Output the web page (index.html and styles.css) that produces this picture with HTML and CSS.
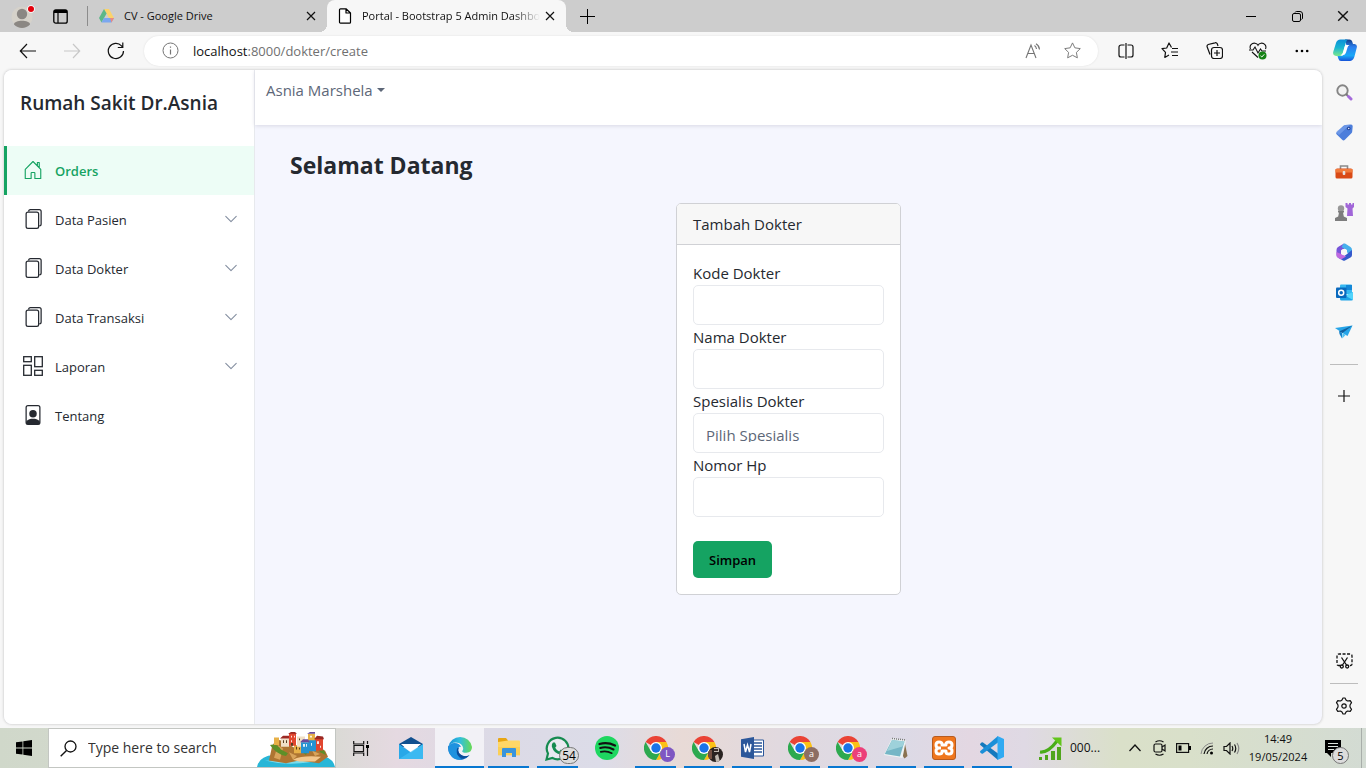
FILE: index.html
```html
<!DOCTYPE html>
<html lang="id">
<head>
<meta charset="utf-8">
<meta name="viewport" content="width=device-width, initial-scale=1">
<title>Portal - Bootstrap 5 Admin Dashboard</title>
<link rel="stylesheet" href="styles.css">
</head>
<body>
<svg class="sprite" aria-hidden="true">
  <symbol id="files" viewBox="0 0 16 16"><path fill="currentColor" fill-rule="evenodd" d="M4 2h7a2 2 0 0 1 2 2v10a2 2 0 0 1-2 2H4a2 2 0 0 1-2-2V4a2 2 0 0 1 2-2zm0 1a1 1 0 0 0-1 1v10a1 1 0 0 0 1 1h7a1 1 0 0 0 1-1V4a1 1 0 0 0-1-1H4z"/><path fill="currentColor" d="M6 0h7a2 2 0 0 1 2 2v10a2 2 0 0 1-2 2v-1a1 1 0 0 0 1-1V2a1 1 0 0 0-1-1H6a1 1 0 0 0-1 1H4a2 2 0 0 1 2-2z"/></symbol>
  <symbol id="chevron" viewBox="0 0 16 16"><path fill="none" stroke="currentColor" stroke-width="1.200" stroke-linecap="round" stroke-linejoin="round" d="M2 5l6 6 6-6"/></symbol>
  <symbol id="close" viewBox="0 0 10 10"><path fill="none" stroke="currentColor" stroke-width="1.2" d="M1 1l8 8M9 1L1 9"/></symbol>
  <symbol id="chrome" viewBox="0 0 24 24"><path fill="#ea4335" d="M12 12L1.6 6A12 12 0 0 1 22.4 6z"/><path fill="#fbc116" d="M12 6h10.4A12 12 0 0 1 12 24l5.2-9z"/><path fill="#2da94f" d="M1.6 6A12 12 0 0 0 12 24l5.2-9L12 12 6.800 15z"/><circle cx="12" cy="12" r="6" fill="#fff"/><circle cx="12" cy="12" r="4.700" fill="#1a73e8"/></symbol>
  <symbol id="star" viewBox="0 0 20 20"><path fill="none" stroke="currentColor" stroke-linejoin="round" d="M10 2l2.500 5.200 5.700.8-4.100 4 1 5.700-5.100-2.700-5.100 2.700 1-5.700-4.100-4 5.700-.8z"/></symbol>
</svg>

<div class="tabbar">
  <button class="tab-tool profile" aria-label="Profile"><svg width="24" height="28" viewBox="0 0 24 28"><circle cx="11" cy="15" r="10.500" fill="#d6d2ca"/><circle cx="11" cy="12" r="5.200" fill="#8b8783"/><path d="M3 22.500c0-5 16-5 16 0-4 4.500-12 4.500-16 0z" fill="#8b8783"/><circle cx="20" cy="7" r="3.800" fill="#fff"/><circle cx="20" cy="7" r="3" fill="#e3000b"/></svg></button>
  <button class="tab-tool" aria-label="Tab actions"><svg width="15" height="15" viewBox="0 0 15 15"><rect x=".8" y=".8" width="13.400" height="13.400" rx="2" fill="none" stroke="#000" stroke-width="1.300"/><path d="M1 1h13v3H1z"/><path d="M5 4v10" stroke="#000" stroke-width="1.200"/></svg></button>
  <span class="tab-rule"></span>
  <div class="tab">
    <svg width="15" height="14" viewBox="0 0 15 14"><path fill="#fcd36a" d="M5 0h5l5 9h-5z"/><path fill="#5cb888" d="M5 0L0 9l2.500 4.500L7.600 4.500z"/><path fill="#7ba7ef" d="M5 9h10l-2.500 4.500h-10z"/><path fill="#ee897d" d="M11 9h4l-2.500 4.500z"/></svg>
    <span class="tab-title">CV - Google Drive</span>
    <button class="tab-close" aria-label="Close tab"><svg width="10" height="10"><use href="#close"/></svg></button>
  </div>
  <div class="tab tab-active">
    <svg width="14" height="16" viewBox="0 0 14 16"><path fill="#fff" stroke="#000" stroke-width="1.200" stroke-linejoin="round" d="M2.500.8H8L12.500 5v9.200a1 1 0 0 1-1 1h-9a1 1 0 0 1-1-1V1.800a1 1 0 0 1 1-1zM8 1v4h4.500"/></svg>
    <span class="tab-title faded">Portal - Bootstrap 5 Admin Dashboard</span>
    <button class="tab-close" aria-label="Close tab"><svg width="10" height="10"><use href="#close"/></svg></button>
  </div>
  <button class="new-tab" aria-label="New tab"><svg width="15" height="15" viewBox="0 0 15 15"><path stroke="#000" d="M7.500 0v15M0 7.500h15"/></svg></button>
  <div class="window-buttons">
    <button aria-label="Minimize"><svg width="10" height="10" viewBox="0 0 10 10"><path stroke="#000" d="M0 5.500h10"/></svg></button>
    <button aria-label="Restore"><svg width="11" height="11" viewBox="0 0 11 11"><path fill="none" stroke="#000" d="M3 1.500Q3.500.5 4.500.5H8A2.500 2.500 0 0 1 10.500 3v4q0 1-1 1.500"/><rect x=".5" y="2.500" width="8" height="8" rx="1.500" fill="none" stroke="#000"/></svg></button>
    <button aria-label="Close"><svg width="12" height="12"><use href="#close"/></svg></button>
  </div>
</div>

<div class="toolbar">
  <button aria-label="Back"><svg width="18" height="16" viewBox="0 0 18 16"><path fill="none" stroke="#111" stroke-width="1.200" d="M17 8H1.500M8 1L1.300 8 8 15"/></svg></button>
  <button aria-label="Forward" class="disabled"><svg width="18" height="16" viewBox="0 0 18 16"><path fill="none" stroke="#c8c8c8" stroke-width="1.200" d="M1 8h15.500M10 1l6.700 7-6.700 7"/></svg></button>
  <button aria-label="Refresh"><svg width="18" height="18" viewBox="0 0 18 18"><path fill="none" stroke="#111" stroke-width="1.200" d="M16.500 9A7.600 7.600 0 1 1 14.500 3.800L15.500 5M15.800.5v5h-5"/></svg></button>
  <div class="omnibox">
    <svg width="17" height="17" viewBox="0 0 17 17"><circle cx="8.500" cy="8.500" r="7.500" fill="none" stroke="#757575"/><path stroke="#757575" stroke-width="1.200" d="M8.500 7.500v5M8.500 4.500v1.300"/></svg>
    <span class="url"><b>localhost</b>:8000/dokter/create</span>
    <button aria-label="Read aloud"><svg width="17" height="16" viewBox="0 0 17 16"><path fill="none" stroke="#757575" stroke-width="1.100" d="M1 15L6 2l5 13M2.800 10.500h6.400M9.500 2.500a5 5 0 0 1 2 3.500M11 .8a7 7 0 0 1 3.500 5.700"/></svg></button>
    <button aria-label="Favorite"><svg class="muted" width="19" height="19"><use href="#star"/></svg></button>
  </div>
  <button aria-label="Split screen"><svg width="16" height="16" viewBox="0 0 16 16"><path fill="none" stroke="#111" stroke-width="1.200" d="M6.500 2H3a2 2 0 0 0-2 2v8a2 2 0 0 0 2 2h3.500M9.500 2H13a2 2 0 0 1 2 2v8a2 2 0 0 1-2 2H9.500M8 0v16"/></svg></button>
  <button aria-label="Favorites"><svg width="18" height="17" viewBox="0 0 18 17"><path fill="none" stroke="#111" stroke-width="1.200" stroke-linejoin="round" d="M10.500 5.500L8 1 5.700 6 1 6.700l3.500 3.700-.7 5L8 13M11 6.500h6M10 10h7M11 13.500h6"/></svg></button>
  <button aria-label="Collections"><svg width="17" height="17" viewBox="0 0 17 17"><g fill="none" stroke="#111" stroke-width="1.200"><path d="M4 12.500L1.200 5a2 2 0 0 1 1-2.500L9 .8a2 2 0 0 1 2.500 1.500L12 4"/><rect x="5.500" y="5.500" width="11" height="11" rx="2.500"/><path d="M11 8v6M8 11h6"/></g></svg></button>
  <button aria-label="Browser essentials"><svg width="18" height="18" viewBox="0 0 18 18"><path fill="none" stroke="#111" stroke-width="1.100" d="M1.500 7C0 3.500 3 .8 6 1.200c1.500.2 2.500 1 3 2 .5-1 1.500-1.800 3-2 3-.4 6 2.300 4.500 5.800M0 8h4l2-3 3 6 2.500-4L13 9h4M3 10l6 5.500"/><circle cx="13.500" cy="13.500" r="4" fill="#168316"/><path d="M11.500 13.800l1.300 1.200 2.500-2.700" fill="none" stroke="#fff"/></svg></button>
  <button aria-label="Settings and more"><svg width="14" height="4" viewBox="0 0 14 4"><circle cx="1.800" cy="2" r="1.300"/><circle cx="7" cy="2" r="1.300"/><circle cx="12.200" cy="2" r="1.300"/></svg></button>
  <button class="copilot" aria-label="Copilot"><svg width="24" height="23" viewBox="0 0 24 23"><defs><linearGradient id="cp1" x2="0" y2="1"><stop stop-color="#0a8fd8"/><stop offset=".5" stop-color="#19b5d2"/><stop offset="1" stop-color="#7be88b"/></linearGradient><linearGradient id="cp2" x2="0" y2="1"><stop stop-color="#123c86"/><stop offset=".35" stop-color="#2b7fef"/><stop offset=".75" stop-color="#19a8f7"/><stop offset="1" stop-color="#1652d8"/></linearGradient></defs><path fill="url(#cp2)" d="M12 .5h4.500q2 0 2.700 2l.8 2.500h1.500q3 .5 2.300 3.500l-2.200 8.500q-1 4.500-4.500 5H8q-2 0-2.700-2.500L4.500 17h3.800q2 0 2.700-2.500l2.500-8z"/><path fill="url(#cp1)" d="M7.500.5h7.200q-1.300 1-2 3.500L10 14q-1 3-3.500 3H3q-3.500-.5-2.800-4L3 4Q4 .8 7.500.5z"/><path fill="#fff" d="M13 6h3.500q-1.500.5-2 2.500l-1.500 5q-.8 2.500-3 2.500H7.500q1.800-.5 2.400-2.500L11.500 8q.5-1.700 1.500-2z"/></svg></button>
</div>

<div class="workspace">
  <div class="page">
    <aside class="sidepanel">
      <div class="brand">Rumah Sakit Dr.Asnia</div>
      <nav class="menu">
        <a class="active" href="#orders"><svg width="20" height="20" viewBox="0 0 16 16"><path fill="none" stroke="currentColor" stroke-width=".9" stroke-linejoin="round" d="M1.800 7.500L8 1.200l6.200 6.300v7.300h-4.700v-4.300a.5.500 0 0 0-.5-.5H7a.5.500 0 0 0-.5.500v4.300H1.800zM11.500 4.500V2h1.500v4"/></svg><span>Orders</span></a>
        <a href="#pasien"><svg width="20" height="20"><use href="#files"/></svg><span>Data Pasien</span><svg class="arrow" width="14" height="14"><use href="#chevron"/></svg></a>
        <a href="#dokter"><svg width="20" height="20"><use href="#files"/></svg><span>Data Dokter</span><svg class="arrow" width="14" height="14"><use href="#chevron"/></svg></a>
        <a href="#transaksi"><svg width="20" height="20"><use href="#files"/></svg><span>Data Transaksi</span><svg class="arrow" width="14" height="14"><use href="#chevron"/></svg></a>
        <a href="#laporan"><svg width="20" height="20" viewBox="0 0 20 20"><g fill="none" stroke="currentColor" stroke-width="1.300"><rect x=".7" y=".7" width="7.600" height="5"/><rect x="11.700" y=".7" width="7.600" height="10"/><rect x=".7" y="9.300" width="7.600" height="10"/><rect x="11.700" y="14.300" width="7.600" height="5"/></g></svg><span>Laporan</span><svg class="arrow" width="14" height="14"><use href="#chevron"/></svg></a>
        <a href="#tentang"><svg width="20" height="20" viewBox="0 0 16 16"><rect x="2.500" y=".5" width="11" height="15" rx="1.500" fill="none" stroke="currentColor"/><circle cx="8" cy="7" r="3" fill="currentColor"/><path fill="currentColor" d="M2.500 14c0-1.500 2-3 5.500-3s5.500 1.500 5.500 3q0 1.500-1.500 1.500H4q-1.500 0-1.500-1.500z"/></svg><span>Tentang</span></a>
      </nav>
    </aside>
    <div class="main">
      <header class="topbar"><button class="user">Asnia Marshela</button></header>
      <main class="content">
        <h1>Selamat Datang</h1>
        <form class="card">
          <div class="card-header">Tambah Dokter</div>
          <div class="card-body">
            <label for="kode">Kode Dokter</label>
            <input id="kode" type="text">
            <label for="nama">Nama Dokter</label>
            <input id="nama" type="text">
            <label for="spesialis">Spesialis Dokter</label>
            <select id="spesialis"><option>Pilih Spesialis</option></select>
            <label for="hp">Nomor Hp</label>
            <input id="hp" type="text">
            <button class="submit" type="button">Simpan</button>
          </div>
        </form>
      </main>
    </div>
  </div>
  <div class="rail">
    <button aria-label="Search"><svg width="17" height="17" viewBox="0 0 17 17"><circle cx="6.500" cy="6.500" r="5.200" fill="#f2f2f2" stroke="#858585" stroke-width="1.900"/><path stroke="#777" stroke-width="2" d="M10 10l2 2"/><path stroke="#a56bdb" stroke-width="3" stroke-linecap="round" d="M12.500 12.500l2.500 2.500"/></svg></button>
    <button aria-label="Shopping"><svg width="17" height="17" viewBox="0 0 17 17"><path fill="#4d7edb" d="M9.500 1L15 .5q1.700 0 1.700 1.700l-.5 5.300q0 1-.8 1.800l-6.500 6.500q-1.400 1.200-2.700 0L.8 10.500q-1.200-1.300 0-2.600l6.700-6.200q.9-.7 2-.7z"/><path fill="#82a9ee" d="M9.500 1L14 .7 3 11 .8 9q-.8-1 .2-2z" opacity=".6"/><circle cx="12.700" cy="4.500" r="1.800" fill="#23459b"/><circle cx="12.700" cy="4.500" r=".8" fill="#dfe9ff"/></svg></button>
    <button aria-label="Tools"><svg width="18" height="14" viewBox="0 0 18 14"><path fill="none" stroke="#8b8b8b" stroke-width="1.600" d="M5.500 4V1h7v3"/><rect x=".5" y="3.500" width="17" height="10" rx="1.500" fill="#d94a16"/><path fill="#f17b3c" d="M.5 4h17v3.500H.5z"/><rect x="7.700" y="6" width="2.600" height="4" rx="1" fill="#e3e3e3"/></svg></button>
    <button aria-label="Games"><svg width="19" height="18" viewBox="0 0 19 18"><path fill="#a166d8" d="M10.500 0h2v1.500h1.500V0h2v1.500h1.500V0H19v4l-1.500 1.500.5 7.500h-6l.5-7.500-2-1.500z"/><circle cx="6" cy="5.500" r="3.200" fill="#989898"/><path fill="#7d7d7d" d="M3 8h6v1.500H8l.8 4L12 15v3H0v-3l3.200-1.500.8-4H3z"/></svg></button>
    <button aria-label="Microsoft 365"><svg width="18" height="18" viewBox="0 0 18 18"><path fill="#7655d9" d="M9 .5L3 4Q1.500 5 1.500 7v5q0 2 1.600 2.800L6 13V7.500L12 4z"/><path fill="#46b0ec" d="M8.500.7q1-.5 2 0L15.500 4Q17 5 17 7v4.500l-5-2V7L6.500 4z"/><path fill="#3459cc" d="M17 7v5q0 1.500-1.500 2.500L10 17.500q-1 .5-2 0L3 14.700l6-1.500 3-2.200z"/><path fill="#c069df" d="M1.500 9v3q0 2 1.600 2.800l3 1.700 5-3-5-2.500z"/><circle cx="9" cy="9" r="3" fill="#f7f7f7"/></svg></button>
    <button aria-label="Outlook"><svg width="17" height="17" viewBox="0 0 17 17"><path fill="#35b8f1" d="M4 1.500Q4 .5 5 .5h10q1 0 1 1V10H4z"/><path fill="#1488d8" d="M10 1h6v5h-6z"/><path fill="#1fa4e7" d="M4 9l6.500 3L17 8v7q0 1.500-1.500 1.500h-10Q4 16.500 4 15z"/><path fill="#52d4fb" d="M17 8v8L9 11.500z"/><rect y="3.500" width="10.500" height="10.500" rx="1" fill="#0969bd"/><circle cx="5.200" cy="8.700" r="2.500" fill="none" stroke="#fff" stroke-width="1.500"/></svg></button>
    <button aria-label="Drop"><svg width="18" height="15" viewBox="0 0 18 15"><path fill="#27a5e8" d="M0 3L17.500.5 12.500 11 7.500 8z"/><path fill="#125f9e" d="M4 6.500L17.500.5 7.500 8z"/><path fill="#1680c9" d="M4 6l3 2v5.500L4.500 9z"/><path fill="#4bc3f5" d="M7.500 8l3 2-3.300 3.500z"/></svg></button>
    <hr>
    <button class="add" aria-label="Customize"><svg width="12" height="12" viewBox="0 0 12 12"><path stroke="#111" d="M6 0v12M0 6h12" stroke-width="1.200"/></svg></button>
    <button class="shot" aria-label="Screenshot"><svg width="17" height="16" viewBox="0 0 17 16"><g fill="none" stroke="#111" stroke-width="1.300"><path stroke-dasharray="3 1.500" d="M4 12.500H2.500q-1.500 0-1.500-1.500V3q0-2 2-2h11q2 0 2 2v8q0 1.500-1.500 1.500H13"/><path d="M5.500 4.500l5 7.500M11.500 4.500l-5 7.500"/><circle cx="5.800" cy="13.500" r="1.500"/><circle cx="11.200" cy="13.500" r="1.500"/></g></svg></button>
    <hr>
    <button class="gear" aria-label="Settings"><svg width="18" height="18" viewBox="0 0 18 18"><g fill="none" stroke="#111" stroke-width="1.200" stroke-linejoin="round"><path d="M7 3l1-2h2l1 2 1.500 1 2.700-.3 1.300 2L15 8v2l1.500 2.300-1.300 2-2.700-.3L11 15l-1 2H8l-1-2-1.500-1-2.700.3-1.300-2L3 10V8L1.500 5.700l1.300-2L5.500 4z"/><circle cx="9" cy="9" r="2.200"/></g></svg></button>
  </div>
</div>

<div class="taskbar">
  <button class="start" aria-label="Start"><svg width="16" height="16" viewBox="0 0 16 16"><path d="M0 2.300L6.500 1.400v6.200H0zM7.300 1.300L16 0v7.600H7.300zM0 8.400h6.500v6.200L0 13.700zM7.300 8.400H16V16l-8.700-1.300z"/></svg></button>
  <div class="search">
    <svg width="17" height="17" viewBox="0 0 17 17"><circle cx="10.500" cy="6.500" r="5.500" fill="none" stroke="#111" stroke-width="1.300"/><path stroke="#111" stroke-width="1.400" d="M6.500 10.500L.7 16.300"/></svg>
    <input type="text" aria-label="Search" placeholder="Type here to search">
    <svg class="island" width="78" height="35" viewBox="0 0 78 38" preserveAspectRatio="none"><path fill="#28b6d7" d="M0 38q2-12 17-13h44q15 2 17 13z"/><path fill="#7bdcec" d="M8 31q28 8 60-2-25 4-60 2z"/><path fill="#ae7532" d="M12 31l3-15 4-8 8 2 7 5 8 5 14-3 12 3 3 7-9 7-20-3-13 3z"/><path fill="#d9a45b" d="M17 28l4-14 5 4-3 12zM32 22l8 4-4 4zM55 20l8 4-5 2z"/><path fill="#f3c78c" d="M36 30q10-5 28-3l-6 5H42z"/><path fill="#5d8f28" d="M13 14q7-2 11 5l7 4-2 3q-10-2-16-12zM44 21q3-3 7-1l-2 5zM60 14q6 1 9 11l-6-3z"/><path fill="#e7b047" d="M17 6h5v8h-5zM51 2h7v12h-7zM37 14h7v9h-7z"/><path fill="#f0dfc6" d="M24 7h8v9h-8zM40 5h8v11h-8z"/><path fill="#e1462f" d="M32 1h7v14h-7zM58 7h8v13h-8z"/><path fill="#9b2823" d="M31 2l3-2h4l2 2zM57 8l3-4 6 1 1 3zM23 7l3-3h6v3z"/><path fill="#2593d2" d="M44 11h8v12h-8zM52 9h7v12h-7z"/><path fill="#694b9a" d="M43 11l3-3h5l2 3zM50 2l3-2h5v2z"/><path fill="#fff" opacity=".85" d="M34 4h1v2h-1zM37 4h1v2h-1zM34 9h1v2h-1zM46 13h2v3h-2zM49 13h1v3h-1zM54 12h1v3h-1zM60 10h2v3h-2zM53 4h2v2h-2zM63 15h1v2h-1z"/><path fill="#554023" d="M26 9h1v3h-1zM29 9h1v3h-1zM42 7h1v2h-1zM39 16h1v3h-1zM42 17h1v2h-1zM34 12h2v3h-2z"/></svg>
  </div>
  <button class="taskview" aria-label="Task View"><svg width="17" height="15" viewBox="0 0 17 15"><path fill="none" stroke="#111" stroke-width="1.200" d="M.7 0v3h10V0M.7 15v-3h10v3M1 4.500h9.500v6H1zM14.500 0v3M14.500 7v8"/><rect x="13" y="4" width="3" height="3"/></svg></button>
  <div class="apps wide">
    <button aria-label="Mail"><svg width="24" height="24" viewBox="0 0 24 24"><path fill="#11508f" d="M0 8l12-7 12 7v3H0z"/><path fill="#fff" d="M2 8h20l-10 9z"/><path fill="#28a8e8" d="M0 8l12 8.500L24 8v15H0z"/><path fill="#43c0f5" d="M0 23L24 8v15z" opacity=".7"/></svg></button>
    <button class="current" aria-label="Edge"><svg width="24" height="24" viewBox="0 0 24 24"><defs><linearGradient id="ed"><stop stop-color="#168ed8"/><stop offset=".5" stop-color="#32bfdc"/><stop offset="1" stop-color="#68da52"/></linearGradient></defs><path fill="#0c63b7" d="M.3 10A12 12 0 0 0 21.500 19.300q-5.500 2.200-9-.8-3.500-3-1.300-7z"/><path fill="#1e92df" d="M.3 11.500Q1 7 6.500 7q5 .2 6.500 4-2.700-1-4 2-1.500 6 5 10.500Q6 25 2 18.500-.2 15 .3 11.500z"/><path fill="url(#ed)" d="M.3 11A12 12 0 0 1 24 11q0 5.500-5.700 5.800-4.600 0-4-1.800 1-1 .9-2.800Q14.500 7 8 6.500 2 6.500.3 11z"/><path fill="#0b4c98" d="M9 13q-1.500 8 6.500 9.200 3.500-.5 6-3-5.500 2.300-9-.7Q9.500 16 9.800 11.500z"/></svg></button>
    <button class="open" aria-label="File Explorer"><svg width="22" height="20" viewBox="0 0 22 20"><path fill="#e8a613" d="M0 1q0-1 1-1h7l2 2.500V6H0z"/><path fill="#ffd766" d="M0 4l10-1.500h11q1 0 1 1V17H0z"/><path fill="#f9c94a" d="M0 9h22v8.500H0z" opacity=".6"/><path fill="#3994dc" d="M4 11q0-1 1-1h12q1 0 1 1v8h-4v-4H8v4H4z"/></svg></button>
    <button class="open" aria-label="WhatsApp"><svg width="25" height="25" viewBox="0 0 25 25"><path fill="#fff" stroke="#168b50" stroke-width="2.200" d="M1.500 23.500L3 17.500A10.800 10.800 0 1 1 7.500 22z" fill-opacity=".4"/><path fill="#168b50" d="M8 6.500h2l1.500 3.500-1.300 1.700q1.300 2.500 4 3.700l1.700-1.900 3.300 1.700q.4 3-3.200 3.300Q9 18 6.800 10.500 6.500 8 8 6.500z"/></svg><span class="badge">54</span></button>
    <button aria-label="Spotify"><svg width="24" height="24" viewBox="0 0 24 24"><circle cx="12" cy="12" r="12" fill="#1ed760"/><path fill="none" stroke="#111" stroke-linecap="round" stroke-width="2.300" d="M4.500 8q8-2.200 15.500 1.500"/><path fill="none" stroke="#111" stroke-linecap="round" stroke-width="2" d="M5.200 12q7-1.800 13.300 1.500"/><path fill="none" stroke="#111" stroke-linecap="round" stroke-width="1.700" d="M5.800 15.800q6-1.300 11 1.400"/></svg></button>
    <button class="open" aria-label="Chrome L"><svg width="24" height="24"><use href="#chrome"/></svg><span class="who violet">L</span></button>
  </div>
  <div class="apps">
    <button class="open" aria-label="Chrome"><svg width="24" height="24"><use href="#chrome"/></svg><span class="who photo"><svg width="15" height="15" viewBox="0 0 15 15"><path fill="#c1bab2" d="M6 1h5v4H6zM7 9l3-2 2 8H8z"/><path fill="#3d302c" d="M6 2h4v2H6z"/><path fill="#765143" d="M0 3h4v9H0z"/></svg></span></button>
    <button class="open" aria-label="Word"><svg width="23" height="22" viewBox="0 0 23 22"><path fill="#fff" stroke="#2b579a" d="M11 3h11.500v16H11z"/><path stroke="#2b579a" stroke-width="1.400" d="M13 6h8M13 9h8M13 12h8M13 15h8"/><path fill="#2b579a" d="M0 2.300L13 0v22L0 19.700z"/><path fill="none" stroke="#fff" stroke-width="1.500" d="M3 7l1.500 8 2-7 2 7L10 7"/></svg></button>
    <button class="open" aria-label="Chrome a"><svg width="24" height="24"><use href="#chrome"/></svg><span class="who brown">a</span></button>
    <button class="open" aria-label="Chrome a"><svg width="24" height="24"><use href="#chrome"/></svg><span class="who pink">a</span></button>
    <button class="open" aria-label="Notepad"><svg width="24" height="22" viewBox="0 0 24 22"><path fill="#8a7250" d="M20 2l3.500 17-3 2.500-2-3z"/><path fill="#eef3f3" d="M8 1l14 2-3.500 18L0 18z"/><path fill="#75b6c6" d="M8 3l12.500 1.500L16 19.500.8 17z"/><path fill="#a9d8df" d="M8 3l12.500 1.500-2 5L3 14z" opacity=".8"/><path stroke="#777" stroke-dasharray="1 1" stroke-width="1.500" d="M8 1.500L22 3"/></svg></button>
    <button class="open" aria-label="XAMPP"><svg width="24" height="24" viewBox="0 0 24 24"><rect x=".5" y=".5" width="23" height="23" rx="2.500" fill="#ef761d" stroke="#b75b20"/><path fill="none" stroke="#fff" stroke-width="3" stroke-linejoin="round" d="M9 12H7q-3 0-3-3t3-3 3 2v1h4V8q0-2 3-2t3 3-3 3q3 0 3 3t-3 3-3-2v-1h-4v1q0 2-3 2t-3-3 3-3"/></svg></button>
    <button class="open" aria-label="Visual Studio Code"><svg width="24" height="24" viewBox="0 0 24 24"><path fill="#1379bd" d="M1.500 6.500L.3 7.800q-.5.600 0 1.200L18 24V17.500L3 6.500q-.8-.5-1.500 0z"/><path fill="#1b8fd8" d="M1.500 17.500L.3 16.200q-.5-.6 0-1.200L18 0v6.500L3 17.500q-.8.500-1.500 0z"/><path fill="#31aaf2" d="M17.500 0L24 3v18l-6.500 3z"/></svg></button>
  </div>
  <div class="tray">
    <button class="stock"><svg width="23" height="23" viewBox="0 0 23 23"><path fill="#50a51c" d="M0 20h3v3H0zM6 18h3v5H6zM12 14h4v9h-4zM18 10h4v13h-4z"/><path fill="none" stroke="#49ad18" stroke-width="3.200" d="M1 15q8 1 17-11"/><path fill="#62c51b" d="M13 .5h9.500v9z"/></svg><span>000...</span></button>
    <button aria-label="Show hidden icons"><svg width="12" height="8" viewBox="0 0 12 8"><path fill="none" stroke="#111" stroke-width="1.300" d="M.5 7L6 1l5.500 6"/></svg></button>
    <button aria-label="Meet Now"><svg width="13" height="16" viewBox="0 0 13 16"><g fill="none" stroke="#111" stroke-width="1.200"><rect x="1" y="4" width="8" height="8" rx="1.500"/><path d="M9 7l3-2v6L9 9M2.500 2q4-2.500 8 0M2.500 14q4 2.500 8 0"/></g></svg></button>
    <button aria-label="Battery"><svg width="15" height="10" viewBox="0 0 15 10"><rect x=".6" y=".6" width="12" height="8.800" fill="none" stroke="#111" stroke-width="1.200"/><path d="M2.500 2.500h3v5h-3zM13 3h2v4h-2z"/></svg></button>
    <button aria-label="Network"><svg width="14" height="14" viewBox="0 0 14 14"><g fill="none"><path stroke="#888" d="M1 13A12 12 0 0 1 13 2"/><path stroke="#111" stroke-width="1.200" d="M4 13a9 9 0 0 1 9-8M7 13a6 6 0 0 1 6-5"/></g><circle cx="11.500" cy="12" r="1.500"/></svg></button>
    <button aria-label="Volume"><svg width="17" height="13" viewBox="0 0 17 13"><g fill="none" stroke="#111" stroke-width="1.200"><path d="M1 4.500h2.500L7 1v11L3.500 8.500H1zM9 4q1.500 2.500 0 5M11.500 2.500q2.500 4 0 8"/><path stroke="#888" d="M14 1q3.500 5.500 0 11"/></g></svg></button>
    <div class="clock"><time>14:49</time><time>19/05/2024</time></div>
    <button class="notify" aria-label="Notifications"><svg width="17" height="17" viewBox="0 0 17 17"><path d="M0 0h16v13H6v4l-4-4H0z"/><path stroke="#dde2dc" stroke-width="1.200" d="M3 3.500h10M3 6.500h10M3 9.500h6"/></svg><span class="badge round">5</span></button>
  </div>
</div>
</body>
</html>
```

FILE: styles.css
```css
*, *::before, *::after { box-sizing: border-box; }

body {
  margin: 0;
  min-height: 100vh;
  display: flex;
  flex-direction: column;
  background: #f7f7f7;
  color: #252930;
  font: 15px/24px "Open Sans", "Noto Sans", sans-serif;
}

button {
  margin: 0;
  padding: 0;
  border: 0;
  background: none;
  color: inherit;
  font: inherit;
  display: flex;
  align-items: center;
  justify-content: center;
}

svg { flex: none; display: block; }
.sprite { position: absolute; width: 0; height: 0; }

/* Browser tabs */
.tabbar {
  height: 32px;
  display: flex;
  align-items: center;
  background: #cdcdcd;
  color: #111;
  font-size: 11px;
  line-height: 16px;
}
.tab-tool { width: 32px; height: 32px; }
.profile { width: 44px; padding-left: 2px; }
.tab-rule { width: 1px; height: 20px; margin-left: 11px; background: #8c8c8c; }
.tab {
  width: 239px;
  height: 32px;
  display: flex;
  align-items: center;
  gap: 10px;
  padding: 0 10px 0 11px;
}
.tab-active {
  position: relative;
  background: #f7f7f7;
  border-radius: 8px 8px 0 0;
}
.tab-active::before,
.tab-active::after {
  content: "";
  position: absolute;
  bottom: 0;
  width: 8px;
  height: 8px;
}
.tab-active::before { left: -8px; background: radial-gradient(circle at 0 0, #cdcdcd 8px, #f7f7f7 8px); }
.tab-active::after { right: -8px; background: radial-gradient(circle at 100% 0, #cdcdcd 8px, #f7f7f7 8px); }
.tab-title { flex: 1; min-width: 0; overflow: hidden; white-space: nowrap; }
.faded { margin-right: -6px; mask-image: linear-gradient(to right, #000 85%, transparent); }
.tab-close { width: 12px; height: 16px; }
.new-tab { width: 42px; height: 32px; }
.window-buttons { display: flex; margin-left: auto; }
.window-buttons button { width: 46px; height: 32px; }

/* Address row */
.toolbar { height: 37px; display: flex; align-items: center; padding-left: 6px; }
.toolbar > button { width: 44px; height: 36px; }
.toolbar > .copilot { width: 42px; }
.omnibox {
  flex: 1;
  height: 30px;
  margin: 0 6px;
  padding: 0 6px 0 18px;
  display: flex;
  align-items: center;
  background: #fff;
  border-radius: 15px;
  box-shadow: 0 0 2px #ddd;
  font-size: 13px;
}
.omnibox button { width: 39px; height: 28px; }
.url { flex: 1; margin-left: 14px; color: #707070; }
.url b { font-weight: 400; color: #111; }
.muted { color: #757575; }

/* Viewport and browser rail */
.workspace { flex: 1; display: flex; padding: 1px 0 4px 4px; }
.page {
  flex: 1;
  display: flex;
  overflow: hidden;
  border-radius: 8px;
  background: #f5f6fe;
  box-shadow: 0 0 3px #bbb;
}
.rail { width: 44px; padding-top: 2px; display: flex; flex-direction: column; align-items: center; }
.rail button { width: 44px; height: 40px; }
.rail hr { width: 28px; margin: 12px 0; border: 0; border-top: 1px solid #bdbdbd; }
.rail .add { height: 38px; }
.rail .shot { height: 20px; margin-top: auto; }
.rail .gear { height: 20px; margin-bottom: 8px; }

/* Portal side panel */
.sidepanel { width: 251px; background: #fff; border-right: 1px solid #e7e9ed; }
.brand { padding: 21px 16px 31px; font-size: 19px; font-weight: 600; white-space: nowrap; }
.menu { display: flex; flex-direction: column; }
.menu a {
  height: 49px;
  display: flex;
  align-items: center;
  gap: 12px;
  padding: 0 16px;
  border-left: 3px solid transparent;
  color: #252930;
  font-size: 13px;
  text-decoration: none;
}
.menu a.active { border-color: #15a362; background: #edfdf6; color: #15a362; font-weight: 600; }
.menu svg { margin-bottom: 2px; }
.menu .arrow { margin-left: auto; color: #828d9f; }

/* Portal content */
.main { flex: 1; display: flex; flex-direction: column; }
.topbar {
  height: 55px;
  padding: 8px 11px;
  background: #fff;
  box-shadow: 0 1px 4px #d8d8e4;
}
.user { color: #5d6778; gap: 4px; }
.user::after { content: ""; border: 4px solid transparent; border-top-color: currentColor; border-bottom: 0; }
.content { flex: 1; padding: 24px 35px; }
h1 { margin: 0 0 22px; font-size: 23px; line-height: 32px; font-weight: 700; }
.card {
  width: 225px;
  margin: 0 auto;
  overflow: hidden;
  background: #fff;
  border: 1px solid #d0d1d5;
  border-radius: 5px;
}
.card-header { padding: 8px 16px; background: #f7f7f7; border-bottom: 1px solid #d0d1d5; }
.card-body { display: flex; flex-direction: column; padding: 16px; }
.card-body input,
.card-body select {
  width: 100%;
  height: 40px;
  margin: 0;
  padding: 9px 12px 10px;
  border: 1px solid #e7e9ed;
  border-radius: 5px;
  background: #fff;
  color: #5d6778;
  font: inherit;
  appearance: none;
}
.submit {
  align-self: flex-start;
  height: 37px;
  margin-top: 24px;
  padding: 0 16px;
  border-radius: 5px;
  background: #15a362;
  color: #000;
  font-size: 13px;
  font-weight: 600;
}

/* Windows taskbar */
.taskbar {
  height: 40px;
  display: flex;
  color: #111;
  background: linear-gradient(90deg, #d0d8ca 0, #d9dad4 24%, #e5d9e1 29%, #dcdae6 36%, #dcdce8 44%, #e8dad6 50%, #e1d9df 57%, #dcdae6 66%, #e3d7e2 71%, #dfd9e4 75%, #dae0c9 82%, #d9e0ca 87%, #d3dbd3 100%);
}
.start { width: 48px; }
.search {
  width: 288px;
  display: flex;
  align-items: center;
  gap: 11px;
  padding-left: 11px;
  background: #fff;
  border: 1px solid #c3c6c2;
}
.search input {
  flex: 1;
  min-width: 0;
  padding: 0;
  border: 0;
  background: none;
  font: 14px/20px "Open Sans", "Noto Sans", sans-serif;
}
.search input::placeholder { color: #333; opacity: 1; }
.island { align-self: flex-end; }
.taskview { width: 50px; }
.apps { display: flex; }
.apps button { position: relative; width: 48px; padding: 0 4px; }
.apps.wide button { width: 49px; }
.apps .current { background: #f2f1f6; border-bottom: 2px solid #0877d1; padding-top: 2px; }
.apps .open::after {
  content: "";
  position: absolute;
  right: 4px;
  bottom: 0;
  left: 4px;
  height: 2px;
  background: #0877d1;
}
.badge {
  position: absolute;
  right: 3px;
  bottom: 4px;
  min-width: 20px;
  height: 17px;
  border: 1px solid #777;
  border-radius: 9px;
  background: #dcdcdc;
  color: #000;
  font-size: 12px;
  line-height: 15px;
}
.who {
  position: absolute;
  right: 5px;
  bottom: 6px;
  width: 15px;
  height: 15px;
  overflow: hidden;
  border-radius: 8px;
  color: #fff;
  font-size: 9px;
  line-height: 14px;
}
.violet { background: #7e57c2; }
.brown { background: #8d6e63; }
.pink { background: #ec407a; }
.photo { background: #2a2321; }
.tray { display: flex; align-items: center; margin-left: auto; padding-right: 4px; }
.tray button { width: 24px; height: 40px; }
.tray .stock { width: 84px; gap: 8px; justify-content: flex-start; font-size: 12px; }
.clock {
  width: 70px;
  display: flex;
  flex-direction: column;
  align-items: center;
  font-size: 11px;
  line-height: 18px;
}
.tray .notify { position: relative; width: 49px; padding-right: 8px; border-right: 1px solid #a8aeaa; }
.notify .badge { right: 12px; }
.badge.round { min-width: 17px; font-size: 11px; }
```
